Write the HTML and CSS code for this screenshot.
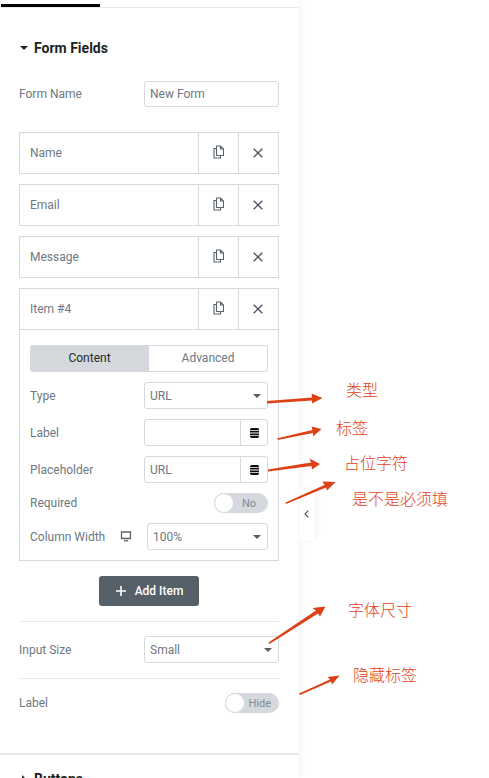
FILE: index.html
```html
<!DOCTYPE html>
<html lang="en">
<head>
<meta charset="utf-8">
<title>Form Fields</title>
<link rel="stylesheet" href="styles.css">
</head>
<body>
<svg class="defs" width="0" height="0" aria-hidden="true">
  <symbol id="copy" viewBox="0 0 11 14"><path d="M3.5 3.5V1H7.5L10.5 4V10.5H7.5M7.5 1V4H10.5M3.5 3.5H1V13H7.5V10.5M3.5 3.5V10.5H7.5" fill="none" stroke="#59636d" stroke-width="1.1"/></symbol>
  <symbol id="close" viewBox="0 0 10 10"><path d="M.7.7 9.3 9.3M9.3.7.7 9.3" fill="none" stroke="#4f5862" stroke-width="1.4"/></symbol>
  <symbol id="db" viewBox="0 0 9 10"><path d="M1.5 0H7.5L9 1V2.2H0V1ZM0 3H9V4.6H0ZM0 5.4H9V7H0ZM0 7.8H9V9L7.5 10H1.5L0 9Z" fill="#0c0c10"/></symbol>
</svg>
<aside class="panel">
  <div class="tabs"><span class="tab-mark"></span></div>
  <section class="section">
    <h2 class="title"><span class="caret-down"></span>Form Fields</h2>
    <div class="row form-name">
      <label class="label">Form Name</label>
      <div class="field wide short">New Form</div>
    </div>
    <div class="repeater">
      <div class="item">
        <div class="item-head"><span class="item-name">Name</span><span class="item-btn"><svg class="i-copy"><use href="#copy"/></svg></span><span class="item-btn"><svg class="i-close"><use href="#close"/></svg></span></div>
      </div>
      <div class="item">
        <div class="item-head"><span class="item-name">Email</span><span class="item-btn"><svg class="i-copy"><use href="#copy"/></svg></span><span class="item-btn"><svg class="i-close"><use href="#close"/></svg></span></div>
      </div>
      <div class="item">
        <div class="item-head"><span class="item-name">Message</span><span class="item-btn"><svg class="i-copy"><use href="#copy"/></svg></span><span class="item-btn"><svg class="i-close"><use href="#close"/></svg></span></div>
      </div>
      <div class="item">
        <div class="item-head open"><span class="item-name">Item #4</span><span class="item-btn"><svg class="i-copy"><use href="#copy"/></svg></span><span class="item-btn"><svg class="i-close"><use href="#close"/></svg></span></div>
        <div class="item-body">
          <div class="switch"><span class="switch-on">Content</span><span class="switch-off">Advanced</span></div>
          <div class="row"><label class="label">Type</label><div class="field select">URL<span class="caret"></span></div></div>
          <div class="row"><label class="label">Label</label><div class="field dyn"><span class="dyn-text"></span><span class="dyn-btn"><svg class="i-db"><use href="#db"/></svg></span></div></div>
          <div class="row"><label class="label">Placeholder</label><div class="field dyn"><span class="dyn-text">URL</span><span class="dyn-btn"><svg class="i-db"><use href="#db"/></svg></span></div></div>
          <div class="row"><label class="label">Required</label><div class="toggle toggle-no"><span class="knob"></span><span class="toggle-text">No</span></div></div>
          <div class="row"><label class="label label-icon">Column Width<svg class="i-monitor" viewBox="0 0 12 11"><path d="M1.5 1H10.5V7.5H1.5Z" fill="none" stroke="#59636d" stroke-width="1.3"/><path d="M4 9.8H8" stroke="#59636d" stroke-width="1.3"/></svg></label><div class="field select narrow">100%<span class="caret"></span></div></div>
        </div>
      </div>
    </div>
    <div class="add-wrap">
      <button class="add"><svg class="i-plus" viewBox="0 0 10 10"><path d="M5 0V10M0 5H10" stroke="#fff" stroke-width="1.6"/></svg>Add Item</button>
    </div>
    <div class="row divided">
      <label class="label">Input Size</label>
      <div class="field select wide">Small<span class="caret"></span></div>
    </div>
    <div class="row divided last">
      <label class="label">Label</label>
      <div class="toggle"><span class="knob"></span><span class="toggle-text">Hide</span></div>
    </div>
  </section>
  <section class="section next">
    <h2 class="title"><span class="caret-right"></span>Buttons</h2>
  </section>
  <div class="collapse"><svg viewBox="0 0 5 8" class="i-chev"><path d="M4.3.7 1 4 4.3 7.3" fill="none" stroke="#4f5862" stroke-width="1.2"/></svg></div>
</aside>
<svg class="arrows" viewBox="0 0 489 778" aria-hidden="true">
  <path d="M267 401 312 397.5 311.5 393.5 322.5 398 312 403.5 312 400.5 267 403.5Z"/>
  <path d="M277.5 438.2 312.5 430 311.5 426.5 321.5 429 313 436.5 313 433 277.5 440Z"/>
  <path d="M268 469.5 311 462.5 309.5 458.5 320 464 312 469.5 311.5 466 268 471.5Z"/>
  <path d="M285.5 502.5 324.5 485 322.5 481.5 335.5 482 327 490.5 326 487.5 286 504Z"/>
  <path d="M268.5 642.5 316 610.5 312.5 608 325.5 606.5 320 616.5 318 613.5 269.5 644Z"/>
  <path d="M299 693.5 330 679.5 327.5 677 339.5 675.5 332 684.5 331 681.5 300 695Z"/>
</svg>
<div class="note n1">类型</div>
<div class="note n2">标签</div>
<div class="note n3">占位字符</div>
<div class="note n4">是不是必须填</div>
<div class="note n5">字体尺寸</div>
<div class="note n6">隐藏标签</div>
</body>
</html>
```
FILE: styles.css
```css
* { box-sizing: border-box; }
html, body { margin: 0; padding: 0; }
body {
  position: relative;
  width: 489px;
  height: 778px;
  overflow: hidden;
  background: #fff;
  font-family: Roboto, "Liberation Sans", sans-serif;
  font-size: 12px;
  color: #6d7882;
}
.defs { position: absolute; }
.panel {
  position: relative;
  width: 299px;
  height: 778px;
  background: #fff;
  box-shadow: 1px 0 6px rgba(0, 0, 0, .06);
}
.tabs {
  height: 8px;
  padding: 4px 0 0 1px;
  border-bottom: 1px solid #e6e8ea;
}
.tab-mark {
  display: block;
  width: 99px;
  height: 3px;
  background: #000;
}
.section { padding: 32px 20px 0 19px; }
.section.next {
  margin-top: 40px;
  padding-top: 16px;
  border-top: 2px solid #e6e8ea;
}
.title {
  display: flex;
  align-items: center;
  height: 16px;
  margin: 0;
  padding-left: 1px;
  font-size: 14px;
  font-weight: 700;
  line-height: 16px;
  color: #1c1f23;
}
.caret-down {
  width: 0;
  height: 0;
  margin-right: 6px;
  border: 4px solid transparent;
  border-top: 4px solid #1c1f23;
  border-bottom: 0;
}
.caret-right {
  width: 0;
  height: 0;
  margin: 0 8px 0 2px;
  border: 4px solid transparent;
  border-left: 4px solid #1c1f23;
  border-right: 0;
}
.row {
  display: flex;
  align-items: center;
  justify-content: space-between;
}
.form-name { margin-top: 25px; }
.label { color: #6d7882; line-height: 16px; }
.label-icon { display: flex; align-items: center; }
.i-monitor { width: 12px; height: 11px; margin-left: 15px; }
.field {
  position: relative;
  display: flex;
  align-items: center;
  width: 124px;
  height: 27px;
  padding-left: 5px;
  border: 1px solid #d5dadf;
  border-radius: 3px;
  background: #fff;
  color: #6d7882;
}
.field.wide { width: 135px; }
.field.narrow { width: 121px; }
.field.short { height: 26px; }
.caret {
  position: absolute;
  right: 6px;
  top: 11px;
  width: 0;
  height: 0;
  border: 4px solid transparent;
  border-top: 4px solid #545d67;
  border-bottom: 0;
}
.dyn { padding-left: 0; }
.dyn-text { flex: 1; padding-left: 5px; }
.dyn-btn {
  display: flex;
  align-items: center;
  justify-content: center;
  width: 27px;
  height: 25px;
  border-left: 1px solid #d5dadf;
}
.i-db { width: 9px; height: 10px; }
.repeater {
  display: flex;
  flex-direction: column;
  gap: 10px;
  margin-top: 25px;
}
.item { border: 1px solid #d5dadf; }
.item-head {
  display: grid;
  grid-template-columns: 1fr 40px 40px;
  height: 40px;
}
.item-head.open { height: 41px; border-bottom: 1px solid #d5dadf; }
.item-name {
  display: flex;
  align-items: center;
  padding-left: 10px;
}
.item-btn {
  display: flex;
  align-items: center;
  justify-content: center;
  padding-right: 1px;
  border-left: 1px solid #d5dadf;
}
.i-copy { width: 11px; height: 14px; margin-top: -2px; }
.i-close { width: 10px; height: 10px; }
.item-body {
  display: flex;
  flex-direction: column;
  gap: 10px;
  padding: 15px 10px 10px;
}
.switch {
  display: grid;
  grid-template-columns: 119px 119px;
  height: 27px;
  line-height: 27px;
  text-align: center;
}
.switch-on {
  border-radius: 3px 0 0 3px;
  background: #d5d8dc;
  color: #23282d;
}
.switch-off {
  border: 1px solid #d5d8dc;
  border-left: 0;
  border-radius: 0 3px 3px 0;
  line-height: 25px;
  color: #6d7882;
}
.toggle {
  position: relative;
  display: flex;
  align-items: center;
  justify-content: flex-end;
  width: 54px;
  height: 20px;
  padding-right: 8px;
  border-radius: 10px;
  background: #d5d8dc;
}
.toggle-no { padding-right: 12px; }
.knob {
  position: absolute;
  left: 0;
  top: 0;
  width: 20px;
  height: 20px;
  border-radius: 50%;
  border: 1px solid #d5d8dc;
  background: #fff;
}
.toggle-text { font-size: 11px; font-weight: 400; color: #818a96; }
.add-wrap {
  display: flex;
  justify-content: center;
  margin-top: 15px;
  padding-bottom: 15px;
}
.add {
  display: flex;
  align-items: center;
  justify-content: center;
  width: 100px;
  height: 30px;
  padding: 0 0 0 1px;
  border: 0;
  border-radius: 3px;
  background: #556068;
  color: #fff;
  font-family: inherit;
  font-size: 12px;
  font-weight: 500;
}
.i-plus { width: 10px; height: 10px; margin-right: 9px; }
.divided {
  padding: 14px 0 15px;
  border-top: 1px solid #e6e8ea;
}
.divided.last { padding-bottom: 0; }
.collapse {
  position: absolute;
  left: 300px;
  top: 488px;
  display: flex;
  align-items: center;
  justify-content: center;
  width: 15px;
  height: 52px;
  padding-right: 2px;
  background: #fff;
  box-shadow: 2px 0 5px rgba(0, 0, 0, .05);
}
.i-chev { width: 5px; height: 8px; }
.arrows {
  position: absolute;
  left: 0;
  top: 0;
  width: 489px;
  height: 778px;
  fill: #dd4014;
  pointer-events: none;
}
.note {
  position: absolute;
  font-family: "Noto Sans CJK SC", sans-serif;
  font-size: 16px;
  line-height: 20px;
  font-weight: 300;
  color: #e0421a;
  white-space: nowrap;
}
.n1 { left: 346px; top: 379px; }
.n2 { left: 336px; top: 417px; }
.n3 { left: 344px; top: 452px; }
.n4 { left: 352px; top: 488px; }
.n5 { left: 348px; top: 599px; }
.n6 { left: 353px; top: 664px; }
```
